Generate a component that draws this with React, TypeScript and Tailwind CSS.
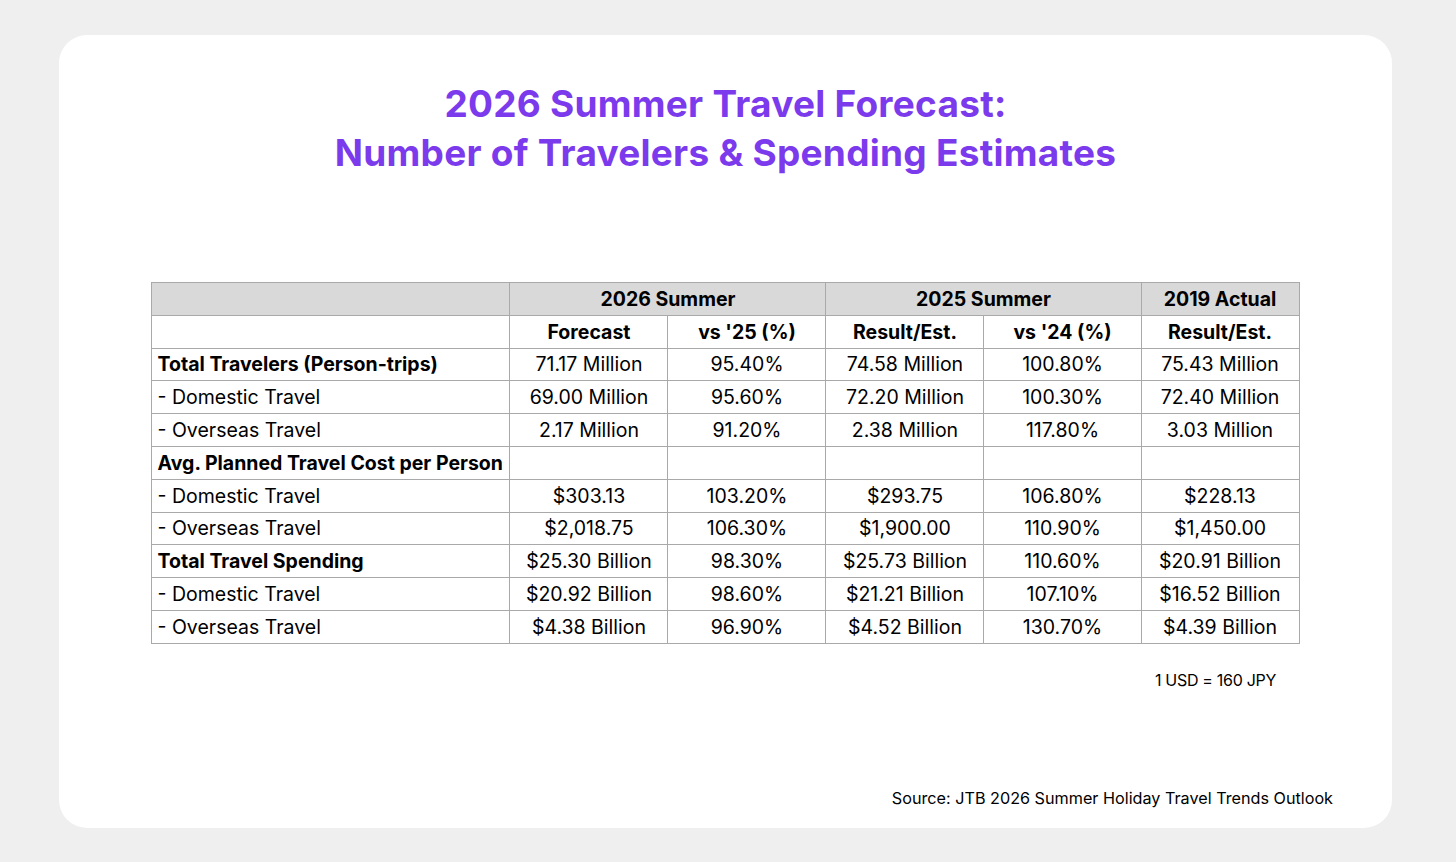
import React from "react";

const rows = [
  { label: "Total Travelers (Person-trips)", bold: true, cells: ["71.17 Million", "95.40%", "74.58 Million", "100.80%", "75.43 Million"] },
  { label: "- Domestic Travel", cells: ["69.00 Million", "95.60%", "72.20 Million", "100.30%", "72.40 Million"] },
  { label: "- Overseas Travel", cells: ["2.17 Million", "91.20%", "2.38 Million", "117.80%", "3.03 Million"] },
  { label: "Avg. Planned Travel Cost per Person", bold: true, cells: ["", "", "", "", ""] },
  { label: "- Domestic Travel", cells: ["$303.13", "103.20%", "$293.75", "106.80%", "$228.13"] },
  { label: "- Overseas Travel", cells: ["$2,018.75", "106.30%", "$1,900.00", "110.90%", "$1,450.00"] },
  { label: "Total Travel Spending", bold: true, cells: ["$25.30 Billion", "98.30%", "$25.73 Billion", "110.60%", "$20.91 Billion"] },
  { label: "- Domestic Travel", cells: ["$20.92 Billion", "98.60%", "$21.21 Billion", "107.10%", "$16.52 Billion"] },
  { label: "- Overseas Travel", cells: ["$4.38 Billion", "96.90%", "$4.52 Billion", "130.70%", "$4.39 Billion"] },
];

const cell = "border border-[#a9a9a9] h-[32.8px] p-0 pt-[1px] text-center";

export default function App() {
  return (
    <div
      className="min-h-screen bg-[#efefef] pt-[35px] pl-[59px] pr-[64px] pb-[34px] text-black"
      style={{ fontFamily: "Inter, 'Liberation Sans', sans-serif" }}
    >
      <div className="bg-white rounded-[28px] h-[793px] w-[1333px] flex flex-col items-center pt-[44px] px-[59px]">
        <h1 className="text-[37px] leading-[49px] font-bold text-[#7c3aed] text-center tracking-[0.25px]">
          2026 Summer Travel Forecast:
          <br />
          Number of Travelers &amp; Spending Estimates
        </h1>

        <table className="mt-[105px] w-[1147px] border-collapse table-fixed text-[19.5px]">
          <colgroup>
            <col className="w-[358px]" />
            <col className="w-[158px]" />
            <col className="w-[158px]" />
            <col className="w-[158px]" />
            <col className="w-[157px]" />
            <col className="w-[158px]" />
          </colgroup>
          <thead>
            <tr className="bg-[#d9d9d9] font-bold">
              <th className={cell}></th>
              <th className={cell} colSpan={2}>2026 Summer</th>
              <th className={cell} colSpan={2}>2025 Summer</th>
              <th className={cell}>2019 Actual</th>
            </tr>
            <tr className="font-bold">
              <th className={cell}></th>
              <th className={cell}>Forecast</th>
              <th className={cell}>vs '25 (%)</th>
              <th className={cell}>Result/Est.</th>
              <th className={cell}>vs '24 (%)</th>
              <th className={cell}>Result/Est.</th>
            </tr>
          </thead>
          <tbody>
            {rows.map((r, i) => (
              <tr key={i}>
                <td className={`border border-[#a9a9a9] h-[32.8px] p-0 pt-[1px] pl-[5px] text-left ${r.bold ? "font-bold" : ""}`}>
                  {r.label}
                </td>
                {r.cells.map((c, j) => (
                  <td key={j} className={cell}>{c}</td>
                ))}
              </tr>
            ))}
          </tbody>
        </table>

        <div className="w-full flex justify-end pr-[57px] mt-[24px] text-[16px] tracking-[-0.3px]">1 USD = 160 JPY</div>
        <div className="flex-1" />
        <div className="w-full flex justify-end pb-[18px] text-[16.2px]">
          Source: JTB 2026 Summer Holiday Travel Trends Outlook
        </div>
      </div>
    </div>
  );
}
